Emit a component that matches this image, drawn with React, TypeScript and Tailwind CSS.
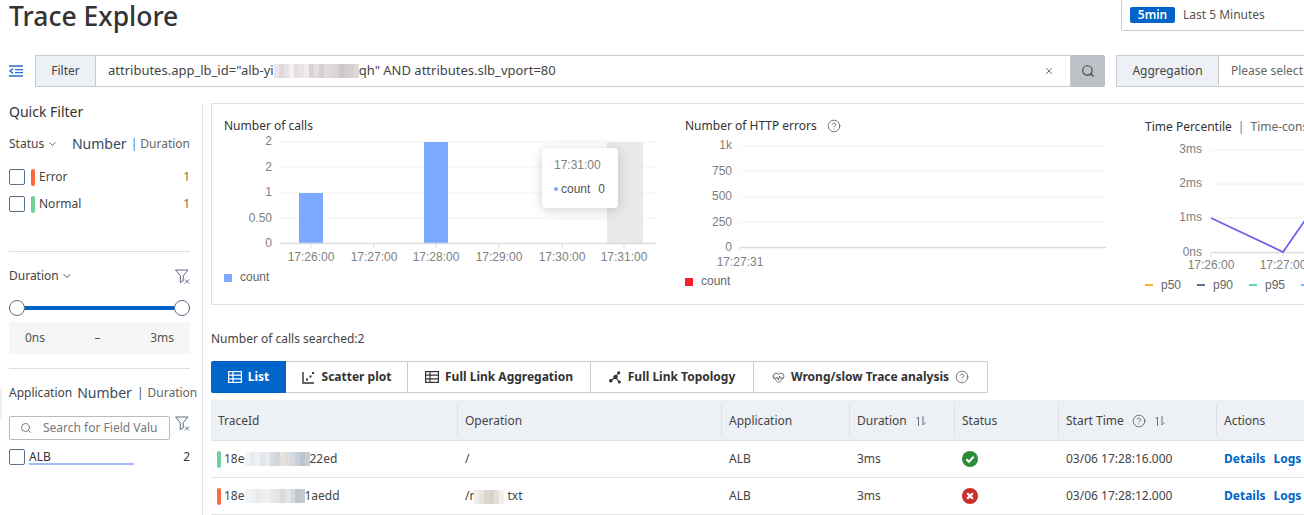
import { ChevronDown, CircleHelp, HeartPulse, Search, X } from "lucide-react";

const FONT = "font-['Noto_Sans','Open_Sans',sans-serif]";
const CHART_FONT = "Liberation Sans, Arial, sans-serif";

const Blur = ({ cells }: { cells: string[] }) => (
  <span className="inline-flex h-[14px] align-middle">
    {cells.map((color, index) => (
      <span key={index} className="w-[5px] h-full" style={{ backgroundColor: color }} />
    ))}
  </span>
);

const FilterClear = () => (
  <svg width="15" height="15" viewBox="0 0 15 15" fill="none" stroke="#5a6b7e" strokeWidth="1">
    <path d="M0.5 1h12.5l-4.8 5.6v5.4l-2.9 1.6v-7z" />
    <path d="M10 10.5l4 4M14 10.5l-4 4" />
  </svg>
);

const SortIcon = () => (
  <svg width="12" height="10" viewBox="0 0 12 10" fill="none" stroke="#6b7480" strokeWidth="1">
    <path d="M1.5 3l2-2v9M8 0v9l2.5-2.5" />
  </svg>
);

const Checkbox = () => (
  <span className="w-4 h-4 shrink-0 rounded-[2px] border border-[#5b7088] bg-white" />
);

const StatusRow = ({ color, label }: { color: string; label: string }) => (
  <div className="flex items-center h-[18px] mb-[9px]">
    <Checkbox />
    <span className="w-1 h-[17px] rounded-sm ml-[6px] mr-1" style={{ backgroundColor: color }} />
    <span className="text-xs text-[#444]">{label}</span>
    <span className="ml-auto text-xs text-[#8a6a3a]">1</span>
  </div>
);

const Sidebar = () => (
  <aside className="relative w-[203px] shrink-0 border-r border-[#e3e3e3] pl-[9px] pr-3 h-[412px]">
    <span className="absolute left-0 top-[285px] w-[2px] h-[32px] bg-[#f0f0f0]" />
    <div className="text-sm text-[#333] leading-5 mt-[-1px]">Quick Filter</div>
    <div className="flex items-center mt-[12px] h-5 text-xs text-[#444] whitespace-nowrap">
      Status
      <ChevronDown size={12} className="ml-[3px] text-[#555]" />
      <span className="ml-[14px] text-sm text-[#3a4a5c]">Number</span>
      <span className="ml-1 text-[#3f7fc0]">|</span>
      <span className="ml-[3px] text-[#666]">Duration</span>
    </div>
    <div className="mt-[14px]">
      <StatusRow color="#fb6a3c" label="Error" />
      <StatusRow color="#6fd09b" label="Normal" />
    </div>
    <div className="border-t border-[#ddd] mt-[38px]" />
    <div className="flex items-center justify-between mt-[14px] h-5 text-xs text-[#444]">
      <span className="flex items-center">
        Duration
        <ChevronDown size={12} className="ml-[2px] text-[#555]" />
      </span>
      <FilterClear />
    </div>
    <div className="relative h-4 mt-[14px] flex items-center">
      <div className="w-full h-1 bg-[#0064c8]" />
      <span className="absolute left-0 w-4 h-4 rounded-full bg-white border border-[#5b7088]" />
      <span className="absolute right-0 w-4 h-4 rounded-full bg-white border border-[#5b7088]" />
    </div>
    <div className="flex items-center justify-between h-8 mt-[6px] px-4 bg-[#f6f6f6] text-xs text-[#555]">
      <span>0ns</span>
      <span>–</span>
      <span>3ms</span>
    </div>
    <div className="border-t border-[#ddd] mt-[14px]" />
    <div className="flex items-center mt-[14px] h-5 text-xs text-[#444] whitespace-nowrap">
      Application
      <ChevronDown size={12} className="ml-[3px] text-[#555]" />
      <span className="ml-[2px] text-sm text-[#3a4a5c]">Number</span>
      <span className="ml-[5px] text-[#555]">|</span>
      <span className="ml-[4px] text-[#666]">Duration</span>
    </div>
    <div className="flex items-start justify-between mt-[13px]">
      <div className="flex items-center w-[161px] h-6 border border-[#bbb] rounded-[2px] pl-[10px] overflow-hidden">
        <Search size={12} className="text-[#777] shrink-0" />
        <span className="ml-[11px] text-xs text-[#777] whitespace-nowrap">Search for Field Valu</span>
      </div>
      <FilterClear />
    </div>
    <div className="flex items-center mt-[9px] h-4 text-xs text-[#333]">
      <Checkbox />
      <span className="ml-1 border-b-2 border-[#a0bff5] w-[105px] leading-[14px] h-[15px]">ALB</span>
      <span className="ml-auto">2</span>
    </div>
  </aside>
);

const axisText = { fontFamily: CHART_FONT, fontSize: 12, fill: "#808080" };

const CallsChart = () => (
  <div className="relative w-[460px] shrink-0 pl-[12px] pt-[13px]">
    <div className="text-xs text-[#333] h-[18px] leading-[18px]">Number of calls</div>
    <svg width="448" height="165" className="block mt-[2px] overflow-visible">
      {[5, 30, 56, 81].map((y) => (
        <line key={y} x1="56" x2="432" y1={y} y2={y} stroke="#f3f3f3" />
      ))}
      <rect x="383" y="5" width="36" height="101" fill="#e9e9e9" />
      <rect x="75" y="56" width="24" height="50" fill="#7da9ff" />
      <rect x="200" y="5" width="24" height="101" fill="#7da9ff" />
      <line x1="56" x2="432" y1="106.5" y2="106.5" stroke="#ddd" strokeWidth="1.5" />
      {["2", "2", "1", "0.50", "0"].map((label, index) => (
        <text key={index} x="48" y={[8, 34, 59, 85, 110][index]} textAnchor="end" {...axisText}>
          {label}
        </text>
      ))}
      {[87, 150, 212, 275, 338, 400].map((x, index) => (
        <g key={x}>
          <line x1={x} x2={x} y1="107" y2="111" stroke="#ddd" />
          <text x={x} y="124" textAnchor="middle" {...axisText}>
            {`17:${26 + index}:00`}
          </text>
        </g>
      ))}
      <rect x="0" y="137" width="8" height="8" fill="#7da9ff" />
      <text x="16" y="144" fontFamily={CHART_FONT} fontSize="12" fill="#666">
        count
      </text>
    </svg>
    <div className="absolute left-[330px] top-[44px] w-[76px] h-[60px] bg-white rounded-[4px] shadow-[0_2px_12px_rgba(0,0,0,0.18)] px-3 pt-[10px] font-['Liberation_Sans',sans-serif] text-xs">
      <div className="text-[#808080] leading-[14px]">17:31:00</div>
      <div className="flex items-center mt-[10px] text-[#555] leading-[14px]">
        <span className="w-1 h-1 rounded-full bg-[#7da9ff] mr-[3px]" />
        count
        <span className="ml-2">0</span>
      </div>
    </div>
  </div>
);

const ErrorsChart = () => (
  <div className="w-[473px] shrink-0 pl-[13px] pt-[13px]">
    <div className="flex items-center text-xs text-[#333] h-[18px] whitespace-nowrap">
      Number of HTTP errors
      <CircleHelp size={14} strokeWidth={1.2} className="ml-[10px] text-[#444]" />
    </div>
    <svg width="447" height="165" className="block mt-[2px]">
      {[9, 34, 60, 85].map((y) => (
        <line key={y} x1="55" x2="421" y1={y} y2={y} stroke="#f0f0f0" />
      ))}
      <line x1="55" x2="421" y1="110.5" y2="110.5" stroke="#ddd" strokeWidth="1.5" />
      <line x1="55" x2="55" y1="110" y2="114" stroke="#ddd" />
      {["1k", "750", "500", "250", "0"].map((label, index) => (
        <text key={label} x="47" y={[12, 38, 63, 89, 114][index]} textAnchor="end" {...axisText}>
          {label}
        </text>
      ))}
      <text x="55" y="129" textAnchor="middle" {...axisText}>
        17:27:31
      </text>
      <rect x="0" y="141" width="8" height="8" fill="#f5222d" />
      <text x="16" y="148" fontFamily={CHART_FONT} fontSize="12" fill="#666">
        count
      </text>
    </svg>
  </div>
);

const PercentileChart = () => (
  <div className="w-[200px] shrink-0 pt-[14px]">
    <div className="flex items-center text-xs text-[#333] h-[18px] whitespace-nowrap">
      Time Percentile
      <span className="mx-[6px] text-[#3f7fc0]">|</span>
      <span className="text-[#666]">Time-consuming</span>
    </div>
    <svg width="200" height="165" className="block mt-[1px]">
      {[13, 47, 81].map((y) => (
        <line key={y} x1="66" x2="200" y1={y} y2={y} stroke="#f0f0f0" />
      ))}
      <line x1="66" x2="200" y1="115.5" y2="115.5" stroke="#ddd" strokeWidth="1.5" />
      {["3ms", "2ms", "1ms", "0ns"].map((label, index) => (
        <text key={label} x="57" y={[16, 50, 84, 119][index]} textAnchor="end" {...axisText}>
          {label}
        </text>
      ))}
      <polyline points="66,81 138,115 172,66" fill="none" stroke="#6c63ec" strokeWidth="1.8" />
      <line x1="66" x2="66" y1="116" y2="120" stroke="#ddd" />
      <line x1="138" x2="138" y1="116" y2="120" stroke="#ddd" />
      <text x="66" y="132" textAnchor="middle" {...axisText}>
        17:26:00
      </text>
      <text x="138" y="132" textAnchor="middle" {...axisText}>
        17:27:00
      </text>
      {[
        { x: 0, color: "#f5b52b", label: "p50" },
        { x: 52, color: "#5b6e96", label: "p90" },
        { x: 104, color: "#5ad8a6", label: "p95" },
      ].map((item) => (
        <g key={item.label}>
          <line x1={item.x} x2={item.x + 8} y1="148" y2="148" stroke={item.color} strokeWidth="2" />
          <text x={item.x + 16} y="152" fontFamily={CHART_FONT} fontSize="12" fill="#666">
            {item.label}
          </text>
        </g>
      ))}
      <line x1="156" x2="164" y1="148" y2="148" stroke="#7da9ff" strokeWidth="2" />
    </svg>
  </div>
);

const TableIcon = ({ color }: { color: string }) => (
  <svg width="14" height="12" viewBox="0 0 14 12" fill="none" stroke={color} strokeWidth="1.2">
    <rect x="0.6" y="0.6" width="12.8" height="10.8" />
    <path d="M0.6 4.2h12.8M0.6 7.8h12.8M5 0.6v10.8" />
  </svg>
);

const ScatterIcon = () => (
  <svg width="13" height="13" viewBox="0 0 13 13" fill="none" stroke="#333" strokeWidth="1.4">
    <path d="M1 1v11h11" />
    <path d="M4 8.5h2M7.5 5.5h2M10 2h2" strokeWidth="2" />
  </svg>
);

const TopologyIcon = () => (
  <svg width="13" height="13" viewBox="0 0 13 13" fill="#333" stroke="#333" strokeWidth="1.1">
    <path d="M6.5 6L9.5 2M6.5 6L2 9.5M6.5 6L10 11" fill="none" />
    <circle cx="6.5" cy="6" r="1.7" />
    <circle cx="9.8" cy="1.8" r="1" />
    <circle cx="1.8" cy="9.8" r="1.2" />
    <circle cx="10.3" cy="11" r="1" />
  </svg>
);

const tabClass =
  "flex items-center gap-[6px] h-full border-r border-[#c8ccd2] text-xs font-bold text-[#333] whitespace-nowrap";

const Tabs = () => (
  <div className="flex items-center w-[777px] h-8 border border-l-0 border-[#c8ccd2] rounded-[2px] mt-[13px]">
    <div className="flex items-center gap-[6px] w-[75px] h-8 justify-center bg-[#0064c8] text-xs font-bold text-white rounded-l-[2px]">
      <TableIcon color="#fff" />
      List
    </div>
    <div className={`${tabClass} w-[122px] justify-center gap-[7px]`}>
      <ScatterIcon />
      Scatter plot
    </div>
    <div className={`${tabClass} w-[183px] justify-center`}>
      <TableIcon color="#333" />
      Full Link Aggregation
    </div>
    <div className={`${tabClass} w-[163px] justify-center`}>
      <TopologyIcon />
      Full Link Topology
    </div>
    <div className="flex items-center gap-[6px] pl-[18px] text-xs font-bold text-[#333] whitespace-nowrap">
      <HeartPulse size={13} strokeWidth={1.3} />
      Wrong/slow Trace analysis
      <CircleHelp size={14} strokeWidth={1.2} className="text-[#444]" />
    </div>
  </div>
);

const COLUMNS = "grid grid-cols-[246px_264px_128px_105px_104px_158px_120px] w-[1125px]";
const headerCell =
  "flex items-center gap-2 h-[32px] pl-[7px] pt-[2px] border-l border-[#dde1e6] text-xs text-[#444] whitespace-nowrap";

const StatusIcon = ({ ok }: { ok: boolean }) => (
  <svg width="16" height="16" viewBox="0 0 16 16">
    <circle cx="8" cy="8" r="8" fill={ok ? "#2e8b3a" : "#c9302c"} />
    {ok ? (
      <path d="M4.3 8.2l2.6 2.6 4.8-5" fill="none" stroke="#fff" strokeWidth="2" />
    ) : (
      <path d="M5.2 5.2l5.6 5.6M10.8 5.2l-5.6 5.6" fill="none" stroke="#fff" strokeWidth="2.2" />
    )}
  </svg>
);

const rows = [
  {
    ok: true,
    color: "#6fd09b",
    head: "18e",
    tail: "22ed",
    cells: ["#f2f4f6", "#e6ecf0", "#eef1f3", "#e0e6ea", "#e8ecee", "#d6dce2", "#cfd6dc", "#e4e2de", "#e0ddd8", "#d4dae0", "#c8d0d8", "#bcc6d0", "#c6ced6"],
    operation: <>/</>,
    time: "03/06 17:28:16.000",
  },
  {
    ok: false,
    color: "#fb6a3c",
    head: "18e",
    tail: "1aedd",
    cells: ["#f2f4f6", "#eef1f3", "#e8ecef", "#eceff1", "#f0f0f0", "#e6e8ea", "#e6e2e0", "#dcd8d6", "#e2e4e6", "#d6dade", "#bfc7cd", "#c4ccd2"],
    operation: (
      <>
        /r
        <Blur cells={["#f2efea", "#e8e3dc", "#dcd6ce", "#d8d2ca", "#e4dfd8", "#f2f0ec"]} /> txt
      </>
    ),
    time: "03/06 17:28:12.000",
  },
];

const TraceTable = () => (
  <div className="mt-[7px]">
    <div className={`${COLUMNS} h-[41px] items-center bg-[#edf0f5] border-b border-[#e3e3e3]`}>
      <div className={`${headerCell} border-l-0 pl-2`}>TraceId</div>
      <div className={headerCell}>Operation</div>
      <div className={headerCell}>Application</div>
      <div className={headerCell}>
        Duration <SortIcon />
      </div>
      <div className={headerCell}>Status</div>
      <div className={`${headerCell} pt-0`}>
        Start Time
        <CircleHelp size={14} strokeWidth={1.2} className="text-[#444]" />
        <SortIcon />
      </div>
      <div className={headerCell}>Actions</div>
    </div>
    {rows.map((row) => (
      <div key={row.time} className={`${COLUMNS} h-[37px] items-center border-b border-[#e3e3e3] text-xs text-[#444]`}>
        <div className="flex items-center pl-[6px]">
          <span className="w-1 h-[17px] rounded-sm mr-[3px]" style={{ backgroundColor: row.color }} />
          {row.head}
          <Blur cells={row.cells} />
          {row.tail}
        </div>
        <div className="pl-2">{row.operation}</div>
        <div className="pl-2">ALB</div>
        <div className="pl-2">3ms</div>
        <div className="pl-2 flex">
          <StatusIcon ok={row.ok} />
        </div>
        <div className="pl-2 whitespace-nowrap">{row.time}</div>
        <div className="pl-2 font-bold text-[#0064c8] whitespace-nowrap">
          Details<span className="ml-2">Logs</span>
        </div>
      </div>
    ))}
  </div>
);

const Toolbar = () => (
  <div className="flex items-center h-8 mt-6 whitespace-nowrap">
    <svg width="14" height="12" viewBox="0 0 14 12" fill="none" stroke="#2a6fc9" strokeWidth="1.4" className="ml-[9px] mr-[12px] shrink-0">
      <path d="M0 1h14M6 4.6h8M6 7.6h8M0 11h14" />
      <path d="M4 3.6L1 6l3 2.4" />
    </svg>
    <div className="flex items-center justify-center w-[61px] shrink-0 h-8 bg-[#edf0f5] border border-[#c8ccd2] text-xs text-[#444]">
      Filter
    </div>
    <div className="flex items-center w-[975px] shrink-0 h-8 border border-l-0 border-[#c8ccd2] pl-3 pr-4 text-[13px] text-[#444]">
      attributes.app_lb_id="alb-yi
      <Blur cells={["#ece6ea", "#e0d8dc", "#e8e2e6", "#f4f0ee", "#e4dee2", "#e8e4e8", "#f0ecee", "#d8d4d0", "#e4dee0", "#d4cfd4", "#e0dcd8", "#dcd8dc", "#d8d4d4", "#ccc8c8", "#d2ced0", "#d6d2d0", "#dedad8"]} />
      qh" AND attributes.slb_vport=80
      <X size={10} className="ml-auto text-[#555]" />
    </div>
    <div className="flex items-center justify-center w-[34px] shrink-0 h-8 bg-[#bcc1c8] rounded-r-[2px]">
      <Search size={14} className="text-[#444]" />
    </div>
    <div className="flex items-center justify-center w-[103px] shrink-0 h-8 ml-[11px] bg-[#edf0f5] border border-[#c8ccd2] text-xs text-[#444]">
      Aggregation
    </div>
    <div className="flex items-center w-[200px] h-8 pl-3 border-y border-[#c8ccd2] text-xs text-[#666] shrink-0">
      Please select
    </div>
  </div>
);

export default function App() {
  return (
    <div className={`${FONT} w-[1304px] h-[515px] overflow-hidden bg-white`}>
      <div className="flex items-start justify-between h-[31px]">
        <h1 className="ml-[9px] text-[26.5px] leading-[32px] font-medium text-[#333]">Trace Explore</h1>
        <div className="flex items-center w-[200px] h-[32px] mt-[-1px] mr-[-17px] border border-[#c8ccd2] rounded-[2px] pl-2">
          <span className="flex items-center justify-center w-[45px] h-4 rounded-[2px] bg-[#0064c8] text-xs font-semibold text-white">
            5min
          </span>
          <span className="ml-2 text-xs text-[#555]">Last 5 Minutes</span>
        </div>
      </div>
      <Toolbar />
      <div className="flex mt-4">
        <Sidebar />
        <main className="flex-1 min-w-0 pl-2">
          <div className="flex w-[1200px] h-[202px] border border-[#e0e0e0]">
            <CallsChart />
            <ErrorsChart />
            <PercentileChart />
          </div>
          <div className="mt-[25px] text-xs text-[#444] leading-[18px]">Number of calls searched:2</div>
          <Tabs />
          <TraceTable />
        </main>
      </div>
    </div>
  );
}
